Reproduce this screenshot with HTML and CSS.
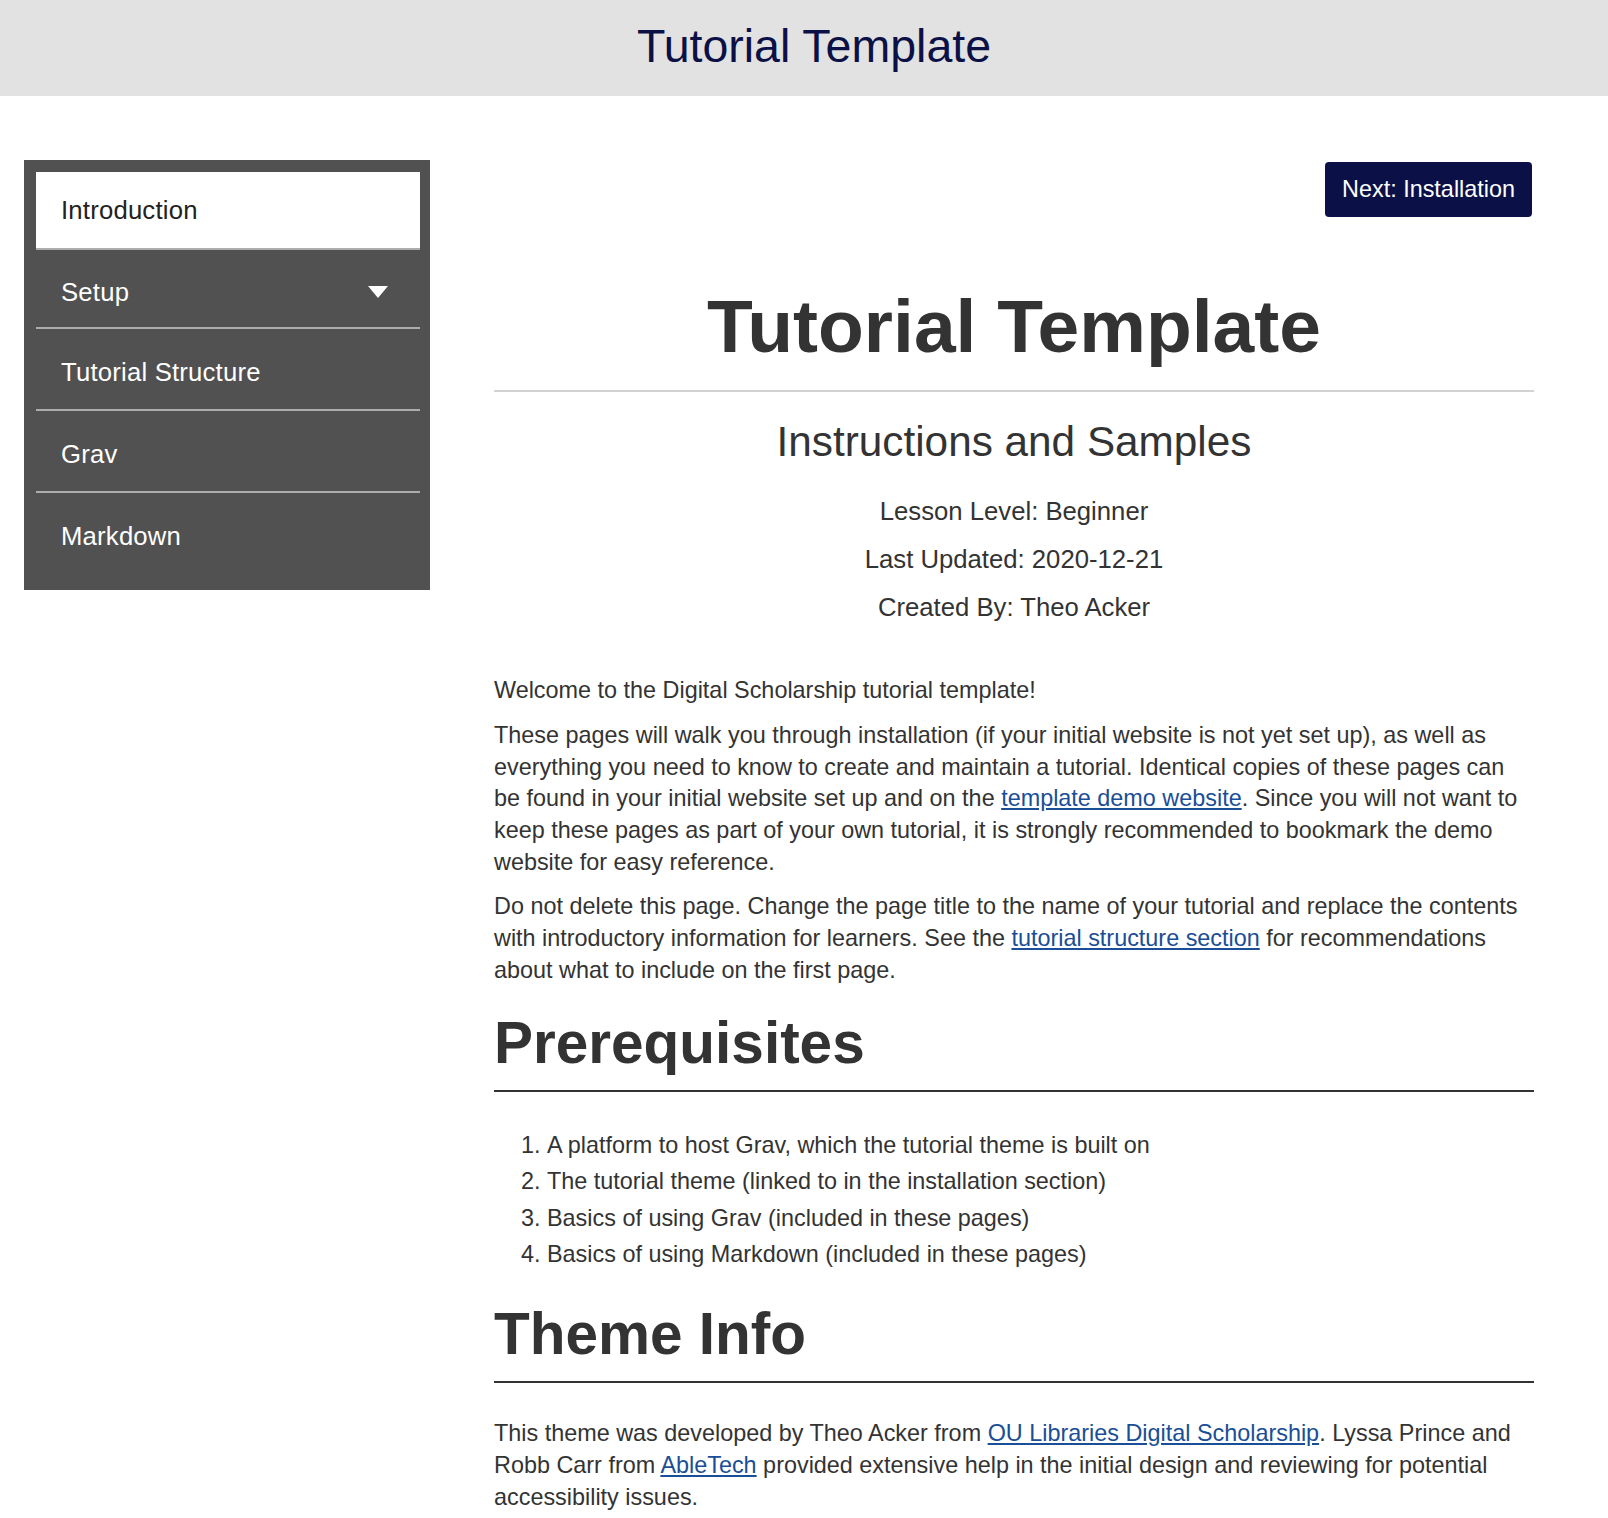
FILE: index.html
```html
<!DOCTYPE html>
<html lang="en">
<head>
<meta charset="utf-8">
<title>Tutorial Template</title>
<link rel="stylesheet" href="styles.css">
</head>
<body>
<header class="site-header">
  <div class="site-title">Tutorial Template</div>
</header>
<div class="layout">
  <nav class="sidebar">
    <ul class="menu">
      <li class="menu-item active"><span>Introduction</span></li>
      <li class="menu-item has-sub"><span>Setup</span><span class="caret"></span></li>
      <li class="menu-item"><span>Tutorial Structure</span></li>
      <li class="menu-item"><span>Grav</span></li>
      <li class="menu-item last"><span>Markdown</span></li>
    </ul>
  </nav>
  <main class="content">
    <div class="next-row"><a class="next-btn" href="#">Next: Installation</a></div>
    <h1 class="page-title">Tutorial Template</h1>
    <hr class="title-rule">
    <h2 class="subtitle">Instructions and Samples</h2>
    <div class="meta">
      <p>Lesson Level: Beginner</p>
      <p>Last Updated: 2020-12-21</p>
      <p>Created By: Theo Acker</p>
    </div>
    <div class="body-text">
      <p class="first">Welcome to the Digital Scholarship tutorial template!</p>
      <p>These pages will walk you through installation (if your initial website is not yet set up), as well as everything you need to know to create and maintain a tutorial. Identical copies of these pages can be found in your initial website set up and on the <a href="#">template demo website</a>. Since you will not want to keep these pages as part of your own tutorial, it is strongly recommended to bookmark the demo website for easy reference.</p>
      <p>Do not delete this page. Change the page title to the name of your tutorial and replace the contents with introductory information for learners. See the <a href="#">tutorial structure section</a> for recommendations about what to include on the first page.</p>
      <h2 class="section-heading">Prerequisites</h2>
      <ol class="prereq">
        <li>A platform to host Grav, which the tutorial theme is built on</li>
        <li>The tutorial theme (linked to in the installation section)</li>
        <li>Basics of using Grav (included in these pages)</li>
        <li>Basics of using Markdown (included in these pages)</li>
      </ol>
      <h2 class="section-heading second">Theme Info</h2>
      <p class="after-heading">This theme was developed by Theo Acker from <a href="#">OU Libraries Digital Scholarship</a>. Lyssa Prince and Robb Carr from <a href="#">AbleTech</a> provided extensive help in the initial design and reviewing for potential accessibility issues.</p>
    </div>
  </main>
</div>
</body>
</html>
```
FILE: styles.css
```css
html, body {
  margin: 0;
  padding: 0;
  background: #ffffff;
}

body {
  font-family: "Liberation Sans", Arial, Helvetica, sans-serif;
  color: #333333;
  font-size: 23.4px;
}

.site-header {
  background: #e2e2e2;
  height: 96px;
  display: flex;
  align-items: center;
  justify-content: center;
  padding-left: 20px;
  padding-bottom: 3px;
  box-sizing: border-box;
}

.site-title {
  font-size: 46.5px;
  color: #0b1147;
  line-height: 1.15;
}

.layout {
  display: grid;
  grid-template-columns: 406px 1040px;
  column-gap: 64px;
  padding: 64px 74px 0 24px;
  align-items: start;
}

/* Sidebar */
.sidebar {
  background: #515151;
  padding: 12px 10px 17px 12px;
}

.menu {
  list-style: none;
  margin: 0;
  padding: 0;
}

.menu-item {
  height: 82px;
  box-sizing: border-box;
  border-bottom: 2px solid #acacac;
  display: flex;
  align-items: center;
  justify-content: space-between;
  padding: 7px 32px 0 25px;
  color: #ffffff;
  font-size: 25.7px;
  letter-spacing: 0.2px;
}

.menu-item.active {
  background: #ffffff;
  color: #222222;
  height: 78px;
  padding-top: 0;
}

.menu-item.has-sub {
  height: 79px;
}

.menu-item.last {
  border-bottom: none;
  height: 80px;
}

.caret {
  width: 0;
  height: 0;
  border-left: 10px solid transparent;
  border-right: 10px solid transparent;
  border-top: 12px solid #ffffff;
}

/* Content */
.content {
  padding-top: 2px;
}

.next-row {
  display: flex;
  justify-content: flex-end;
}

.next-btn {
  display: block;
  background: #0b1147;
  color: #ffffff;
  text-decoration: none;
  font-size: 23.4px;
  line-height: 55px;
  padding: 0 17px;
  border-radius: 4px;
  margin-right: 2px;
}

.page-title {
  font-size: 75px;
  line-height: 84px;
  font-weight: bold;
  text-align: center;
  margin: 67px 0 0;
  color: #333333;
}

.title-rule {
  border: 0;
  height: 2px;
  background: #d2d2d2;
  margin: 22px 0 0;
}

.subtitle {
  font-size: 42.3px;
  line-height: 50.4px;
  font-weight: normal;
  text-align: center;
  margin: 25px 0 0;
}

.meta {
  text-align: center;
  margin-top: 27px;
}

.meta p {
  font-size: 25.7px;
  line-height: 34.7px;
  margin: 0 0 13.3px;
}

.body-text {
  margin-top: 50px;
}

.body-text p {
  line-height: 31.8px;
  margin: 0 0 12.8px;
}

.body-text a {
  color: #1a4e96;
  text-decoration: underline;
}

.section-heading {
  font-size: 58.5px;
  line-height: 70px;
  font-weight: bold;
  margin: 21px 0 0;
  padding-bottom: 12px;
  border-bottom: 2px solid #333333;
}

.section-heading.second {
  margin-top: 28px;
}

.prereq {
  margin: 38px 0 0;
  padding-left: 53px;
}

.prereq li {
  line-height: 31.8px;
  margin-bottom: 4.7px;
}

.body-text p.after-heading {
  margin-top: 35px;
}
```
